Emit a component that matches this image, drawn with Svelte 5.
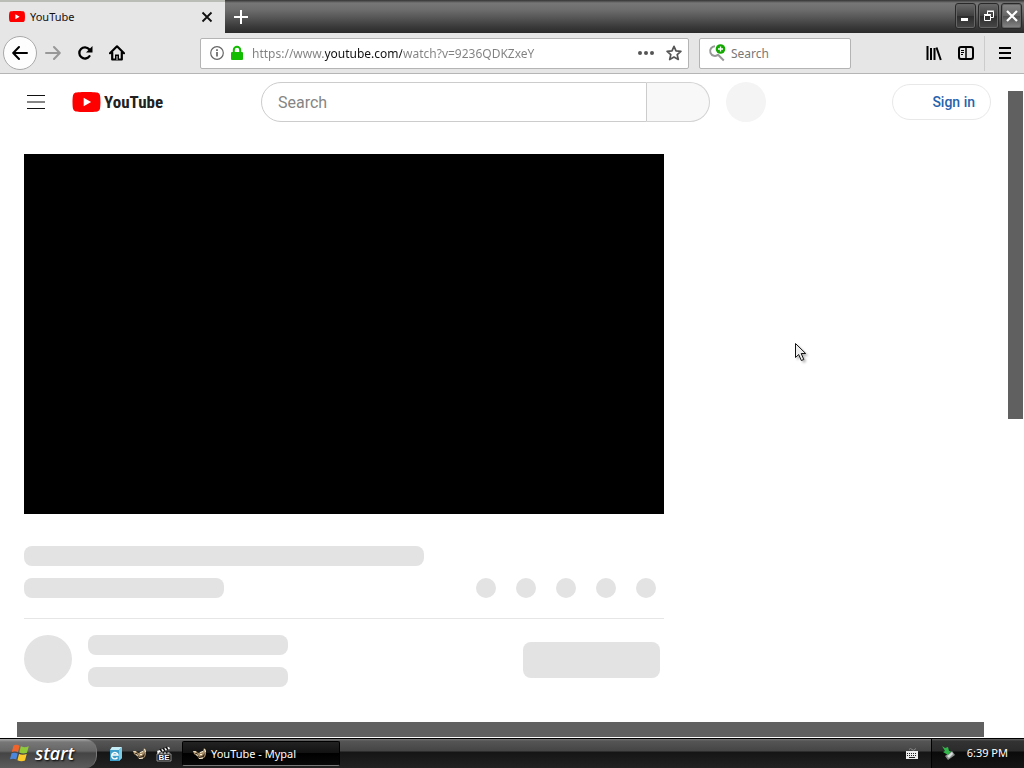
<script lang="ts">
  let url = $state('https://www.youtube.com/watch?v=9236QDKZxeY');
  let webQuery = $state('');
  let siteQuery = $state('');

  const actions = [1, 2, 3, 4, 5];
</script>

<svelte:head><title>YouTube - Mypal</title></svelte:head>

{#snippet ytMark()}
  <svg class="yt-mark" viewBox="0 0 28 20" aria-hidden="true">
    <path d="M27.400 3.100A3.500 3.500 0 0 0 24.900.6C22.700 0 14 0 14 0S5.300 0 3.100.6A3.500 3.500 0 0 0 .6 3.100C0 5.300 0 10 0 10s0 4.700.6 6.900a3.500 3.500 0 0 0 2.500 2.500C5.300 20 14 20 14 20s8.700 0 10.900-.6a3.500 3.500 0 0 0 2.500-2.500C28 14.700 28 10 28 10s0-4.700-.6-6.900z" fill="#f00" />
    <path d="M11.200 14.300V5.700l7.400 4.300z" fill="#fff" />
  </svg>
{/snippet}

{#snippet mypal()}
  <svg width="16" height="16" viewBox="0 0 16 16" aria-hidden="true">
    <path d="M1 5l3 0 2 2 3-1 2-1 1-3 2 2 0 4-1 3-3 2H7l-2-3-3-2z" fill="#a58d68" />
    <path d="M3 7l2 0 2 4 3-1 3-3-1 4-3 1H7z" fill="#3b2c20" />
    <path d="M1.500 5.500l2.500.5M7 12.500l4-.5M8 6.500l3-1M12.500 3l1 3M4.500 8l1 2M8 8.500h2" stroke="#fbf0d4" fill="none" />
  </svg>
{/snippet}

<div class="desktop">
  <header class="titlebar">
    <div class="tab">
      <span class="tab-icon">{@render ytMark()}</span>
      <span class="tab-title">YouTube</span>
      <button class="tab-close" aria-label="Close tab">
        <svg width="12" height="12" viewBox="0 0 12 12"><path d="M1.500 1.500l9 9M10.500 1.500l-9 9" stroke="#111" stroke-width="1.800" /></svg>
      </button>
    </div>
    <button class="new-tab" aria-label="New tab">
      <svg width="14" height="14" viewBox="0 0 14 14"><path d="M7 0v14M0 7h14" stroke="#fff" stroke-width="2" /></svg>
    </button>
    <div class="win-controls">
      <button aria-label="Minimize">
        <svg width="12" height="12" viewBox="0 0 12 12"><path d="M1 8h7v3H1z" fill="#fff" /></svg>
      </button>
      <button aria-label="Restore">
        <svg width="12" height="12" viewBox="0 0 12 12" fill="none" stroke="#fff"><path d="M1.500 5.500h6v5h-6zM1 4.500h7M4.500 4V1.500h6v6H8M4 1h7" /></svg>
      </button>
      <button class="close" aria-label="Close">
        <svg width="12" height="12" viewBox="0 0 12 12"><path d="M1 1l10 10M11 1L1 11" stroke="#fff" stroke-width="2.200" /></svg>
      </button>
    </div>
  </header>

  <nav class="toolbar">
    <button class="back" aria-label="Back">
      <svg width="16" height="16" viewBox="0 0 16 16" fill="none" stroke="#000" stroke-width="2" stroke-linecap="round" stroke-linejoin="round"><path d="M15 8H1.500M7 2L1.200 8 7 14" /></svg>
    </button>
    <button class="tool" aria-label="Forward" disabled>
      <svg width="16" height="16" viewBox="0 0 16 16" fill="none" stroke="#989898" stroke-width="2" stroke-linecap="round" stroke-linejoin="round"><path d="M1 8h13.500M9 2l5.800 6L9 14" /></svg>
    </button>
    <button class="tool" aria-label="Reload">
      <svg width="16" height="16" viewBox="0 0 16 16"><path d="M12.500 11.200A5.600 5.600 0 1 1 12.200 4.300" fill="none" stroke="#000" stroke-width="2.300" stroke-linecap="round" /><path d="M15.500 1v6.500H9z" fill="#000" /></svg>
    </button>
    <button class="tool" aria-label="Home">
      <svg width="16" height="16" viewBox="0 0 16 16"><path d="M1 8.200L8 1.300l7 6.900M3.200 7.500V14.500h9.600V7.500" fill="none" stroke="#000" stroke-width="2.200" stroke-linecap="round" stroke-linejoin="round" /><path d="M6 15V9.500h4V15z" fill="#000" /><path d="M8 11v4" stroke="#ddd" /></svg>
    </button>

    <span class="spring"></span>

    <div class="field urlbar">
      <svg width="14" height="14" viewBox="0 0 14 14"><circle cx="7" cy="7" r="6.300" fill="none" stroke="#666" stroke-width="1.200" /><path d="M7 6v4.500M7 3.200v1.800" stroke="#666" stroke-width="1.700" /></svg>
      <svg width="14" height="16" viewBox="0 0 14 16"><path d="M3.800 8V5a3.200 3.200 0 0 1 6.400 0v3" fill="none" stroke="#12bc00" stroke-width="2" /><rect x="1" y="7" width="12" height="8" rx="1" fill="#12bc00" /></svg>
      <input class="url" type="text" aria-label="Address" bind:value={url} />
      <button class="inline-btn" aria-label="Page actions">
        <svg width="16" height="16" viewBox="0 0 16 16" fill="#555"><circle cx="2" cy="8" r="2" /><circle cx="8" cy="8" r="2" /><circle cx="14" cy="8" r="2" /></svg>
      </button>
      <button class="inline-btn" aria-label="Bookmark this page">
        <svg width="16" height="16" viewBox="0 0 16 16"><path d="M8 1.300l2 4.500 4.900.5-3.700 3.300 1.100 4.900L8 12l-4.300 2.500 1.100-4.900L1.100 6.300 6 5.800z" fill="none" stroke="#555" stroke-width="1.700" stroke-linejoin="round" /></svg>
      </button>
    </div>

    <div class="field searchbar">
      <svg width="18" height="18" viewBox="0 0 18 18"><path d="M7 2.300a4.800 4.800 0 1 0 3.300 8.200M9.800 10.500l6 6" fill="none" stroke="#989898" stroke-width="2" /><circle cx="12.500" cy="5" r="4.800" fill="#12a800" /><path d="M12.500 2.500v5M10 5h5" stroke="#fff" stroke-width="1.300" /></svg>
      <input type="text" aria-label="Web search" placeholder="Search" bind:value={webQuery} />
    </div>

    <span class="spring"></span>

    <button class="tool" aria-label="Library">
      <svg width="16" height="16" viewBox="0 0 16 16"><path d="M1.500 1v14M5 3v12M8.500 3v12M10.500 2.500L14.800 15" stroke="#000" stroke-width="2" /></svg>
    </button>
    <button class="tool" aria-label="Sidebars">
      <svg width="16" height="16" viewBox="0 0 16 16"><rect x="1" y="2" width="14" height="12" rx="2" fill="none" stroke="#000" stroke-width="2" /><path d="M8 2v12" stroke="#000" stroke-width="1.500" /><path d="M3 5.500h3M3 7.500h3M3 9.500h2" stroke="#000" /></svg>
    </button>
    <button class="app-menu" aria-label="Menu">
      <svg width="12" height="12" viewBox="0 0 12 12"><path d="M0 1h12M0 6h12M0 11h12" stroke="#000" stroke-width="2" /></svg>
    </button>
  </nav>

  <div class="viewport">
    <div class="page">
      <header class="masthead">
        <div class="start">
          <button class="guide" aria-label="Guide">
            <svg width="18" height="14" viewBox="0 0 18 14"><path d="M0 .5h18M0 7h18M0 13.500h18" stroke="#111" stroke-width="1.100" /></svg>
          </button>
          <a class="logo" href="/" aria-label="YouTube Home">
            {@render ytMark()}
            <span>YouTube</span>
          </a>
        </div>
        <form class="site-search" onsubmit={(e) => e.preventDefault()}>
          <input type="text" aria-label="Search" placeholder="Search" bind:value={siteQuery} />
          <button aria-label="Submit search"></button>
        </form>
        <button class="mic" aria-label="Search with your voice"></button>
        <a class="sign-in" href="/signin">Sign in</a>
      </header>

      <main class="watch">
        <div class="player"></div>
        <div class="bone title"></div>
        <div class="row">
          <div class="bone line"></div>
          <div class="actions">
            {#each actions as a (a)}
              <span class="bone dot"></span>
            {/each}
          </div>
        </div>
        <div class="owner">
          <div class="bone avatar"></div>
          <div class="owner-lines">
            <div class="bone line"></div>
            <div class="bone line"></div>
          </div>
          <div class="bone subscribe"></div>
        </div>
      </main>
    </div>
    <div class="vscroll"><div class="thumb"></div></div>
    <div class="hscroll"><div class="thumb"></div></div>
  </div>

  <footer class="taskbar">
    <button class="start-btn">
      <svg width="20" height="18" viewBox="0 0 20 18" aria-hidden="true">
        <path d="M3.500 1.500Q6.500 0 9.500 1.800L8 8.200Q5 6.500 1.800 8z" fill="#f0642c" />
        <path d="M10.800 2.300Q14 4 18.800 2.200L17 8.800Q13 10.300 9.300 8.500z" fill="#8fc93a" />
        <path d="M1.500 9.200Q4.500 8 7.700 9.500L6.200 15.500Q3.500 14 0 15.200z" fill="#4d87dc" />
        <path d="M9 9.900Q12.500 11.500 16.700 10L15 16.500Q11 18 7.400 16.200z" fill="#fbcb2c" />
      </svg>
      <span>start</span>
    </button>
    <div class="quick">
      <button aria-label="Internet Explorer">
        <svg width="16" height="16" viewBox="0 0 16 16"><path d="M4 1h10v11l-3 3H2V4z" fill="#3d9fc9" /><path d="M2 4l2-3h10l-3 3z" fill="#c5eef9" /><path d="M11 4l3-3v11l-3 3z" fill="#7cc9e4" /><path d="M9.500 11.500a3.200 3.200 0 1 1 .5-2.500H4.500" fill="none" stroke="#fff" stroke-width="1.400" /></svg>
      </button>
      <button aria-label="Mypal">{@render mypal()}</button>
      <button aria-label="Video editor">
        <svg width="16" height="16" viewBox="0 0 16 16"><path d="M1 5L13 1l1 2L2 7z" fill="#fff" /><path d="M4 3l2 3M7 2l2 3M10 1l2 3" stroke="#111" stroke-width="1.500" /><path d="M1 8h14v7H1z" fill="#0a0a0a" stroke="#ddd" stroke-width=".6" /><path d="M1 7h14" stroke="#fff" stroke-dasharray="2 1.500" /><text x="8" y="14" text-anchor="middle" font-family="Liberation Sans" font-size="8" font-weight="700" fill="#fff">BE</text></svg>
      </button>
    </div>
    <button class="task">{@render mypal()}<span>YouTube - Mypal</span></button>
    <button class="keyboard" aria-label="Input language">
      <svg width="14" height="14" viewBox="0 0 14 14"><path d="M4 2.500q1.500-2 3 0t4-1" fill="none" stroke="#888" /><rect x="1" y="4" width="12" height="8" fill="#eee" /><path d="M2 6.500h10M2 8.500h10" stroke="#222" stroke-dasharray="1 1" /><path d="M4 10.500h6" stroke="#222" /></svg>
    </button>
    <div class="tray">
      <svg width="16" height="16" viewBox="0 0 16 16" aria-hidden="true"><path d="M4 11l7-5 3 4-7 5z" fill="#888d8c" /><path d="M6 11l5-4 1 2-4 4z" fill="#d8dedb" /><path d="M1 1l3 2 3-1 1 4 2 0-3 4-5-3 2-1z" fill="#32b54a" /></svg>
      <time>6:39 PM</time>
    </div>
  </footer>

  <svg class="pointer" width="14" height="21" viewBox="0 0 14 21" aria-hidden="true">
    <path d="M1.500 1.500v14l3.200-3 2.600 6 2.500-1-2.600-6h4.500z" fill="#eee" stroke="#111" />
  </svg>
</div>

<style>
  :global(body) { margin: 0; }
  .desktop { position: relative; display: flex; flex-direction: column; min-height: 100vh; font-family: 'Noto Sans', 'Open Sans', sans-serif; font-size: 11px; background: #fff; }
  .desktop * { box-sizing: border-box; }
  button { padding: 0; border: 0; background: none; font: inherit; color: inherit; display: flex; align-items: center; justify-content: center; }
  input { min-width: 0; padding: 0; border: 0; outline: 0; background: none; font: inherit; }
  svg { display: block; flex: none; }
  a { text-decoration: none; }

  .titlebar { display: flex; height: 33px; background: linear-gradient(#333 0, #777 3px, #6c6c6c 10px, #555 18px, #3c3c3c 26px, #2a2a2a 100%); }
  .tab { display: flex; align-items: center; width: 225px; padding: 0 12px 2px 9px; background: #e6e6e6; border-top: 2px solid #b9bdb6; color: #111; }
  .tab-icon { width: 16px; margin-right: 5px; }
  .tab-title { flex: 1; }
  .yt-mark { width: 100%; }
  .new-tab { width: 32px; }
  .win-controls { display: flex; gap: 2px; margin-left: auto; padding: 3px 2px; }
  .win-controls button { width: 21px; height: 26px; border: 1px solid #292929; border-radius: 3px; background: linear-gradient(#6a6a6a, #3e3e3e 50%, #2c2c2c 50%, #484848); box-shadow: inset 0 0 0 1px #656565; }
  .win-controls .close { background: linear-gradient(#858585, #666 50%, #505050 50%, #888); }

  .toolbar { display: flex; align-items: center; height: 41px; padding-left: 3px; background: #e6e6e6; border-bottom: 1px solid #b5b5b5; }
  .back { width: 34px; height: 34px; border: 1px solid #a9a9a9; border-radius: 50%; background: #fdfdfd; }
  .tool { width: 32px; height: 32px; }
  .spring { flex: 0 1 67px; }
  .field { display: flex; align-items: center; height: 31px; background: #fff; border: 1px solid #b4b4b4; border-radius: 2px; font-size: 12px; color: #777; }
  .field input { flex: 1; height: 24px; color: #777; }
  .field input::placeholder { color: #777; opacity: 1; }
  .urlbar { flex: 1; gap: 6px; padding: 0 3px 0 9px; }
  /* the host part of the address is darker than the rest */
  .field .url { margin-left: 2px; background: linear-gradient(90deg, #808080 73px, #111 73px, #111 150px, #808080 150px); background-clip: text; -webkit-text-fill-color: transparent; }
  .inline-btn { width: 22px; height: 24px; }
  .searchbar { width: 152px; margin-left: 10px; padding: 0 8px; gap: 5px; }
  .app-menu { width: 40px; height: 35px; border-left: 1px solid #ccc; margin-left: 2px; }

  .viewport { flex: 1; display: grid; grid-template-columns: 1fr 16px; grid-template-rows: 1fr 16px; background: #fff; }
  .vscroll { padding: 17px 1px 0 0; }
  .vscroll .thumb { height: 328px; background: #606060; }
  .hscroll { padding: 0 24px 1px 17px; }
  .hscroll .thumb { height: 15px; background: #606060; }

  .page { font-family: Roboto, sans-serif; }
  .masthead { display: flex; align-items: center; height: 56px; padding-right: 17px; }
  .start { display: flex; align-items: center; flex: 0 0 261px; padding-left: 27px; }
  .guide { width: 18px; height: 24px; margin-right: 27px; }
  .logo { display: flex; align-items: center; gap: 3px; color: #212121; font: 700 17px/24px 'Roboto Condensed', Roboto, sans-serif; }
  .logo .yt-mark { width: 29px; height: 20px; }
  .site-search { display: flex; flex: 0 1 449px; height: 40px; }
  .site-search input { flex: 1; padding: 0 16px; border: 1px solid #ccc; border-radius: 20px 0 0 20px; font-size: 16px; }
  .site-search input::placeholder { color: #858585; opacity: 1; }
  .site-search button { width: 63px; border: 1px solid #d3d3d3; border-left: 0; border-radius: 0 20px 20px 0; background: #f8f8f8; }
  .mic { width: 40px; height: 40px; margin-left: 16px; border-radius: 50%; background: #f4f4f4; }
  .sign-in { margin-left: auto; padding: 0 15px 0 39px; border: 1px solid #e8e8e8; border-radius: 18px; color: #2763ad; font-size: 14px; font-weight: 500; line-height: 34px; }

  .watch { max-width: 640px; margin: 24px 24px 0; }
  .player { aspect-ratio: 16 / 9; background: #000; }
  .bone { background: #e3e3e3; border-radius: 8px; }
  .title { width: 400px; height: 20px; margin: 32px 0 12px; }
  .line { width: 200px; height: 20px; }
  .row { display: flex; justify-content: space-between; padding: 0 8px 20px 0; border-bottom: 1px solid #e6e6e6; }
  .actions { display: flex; gap: 20px; }
  .dot { width: 20px; height: 20px; border-radius: 50%; }
  .owner { display: flex; gap: 16px; padding: 16px 4px 16px 0; }
  .avatar { width: 48px; height: 48px; border-radius: 50%; }
  .owner-lines { display: grid; gap: 12px; }
  .subscribe { width: 137px; height: 36px; margin: 7px 0 0 auto; }

  .taskbar { display: flex; height: 30px; align-items: center; border-top: 1px solid #000; background: linear-gradient(#777 0, #555 2px, #454545 12px, #151515 13px, #222 100%); color: #fff; }
  .start-btn { align-self: stretch; width: 97px; gap: 5px; justify-content: flex-start; padding: 0 0 2px 10px; border-right: 1px solid #777; border-radius: 0 12px 12px 0; background: linear-gradient(#aaa 0, #777 3px, #666 12px, #444 14px, #5c5c5c 100%); font: italic 600 18px/24px 'Open Sans', 'Noto Sans', sans-serif; text-shadow: 1px 1px 2px #000; }
  .quick { display: flex; gap: 8px; padding-left: 11px; }
  .task { justify-content: flex-start; gap: 3px; width: 158px; height: 25px; margin-left: 10px; padding-left: 9px; border: 1px solid #000; border-bottom-color: #777; border-radius: 2px; background: linear-gradient(#222, #111 50%, #000 50%, #080808); }
  .keyboard { margin-left: auto; padding-right: 12px; }
  .tray { display: flex; align-items: center; align-self: stretch; gap: 10px; padding: 0 16px 2px 9px; border-left: 1px solid #000; background: linear-gradient(#666 0, #333 2px, #2b2b2b 12px, #0a0a0a 13px, #151515 100%); }

  /* mouse pointer floats over the page */
  .pointer { position: absolute; left: 794px; top: 342px; filter: drop-shadow(2px 2px 1px #0004); }
</style>
